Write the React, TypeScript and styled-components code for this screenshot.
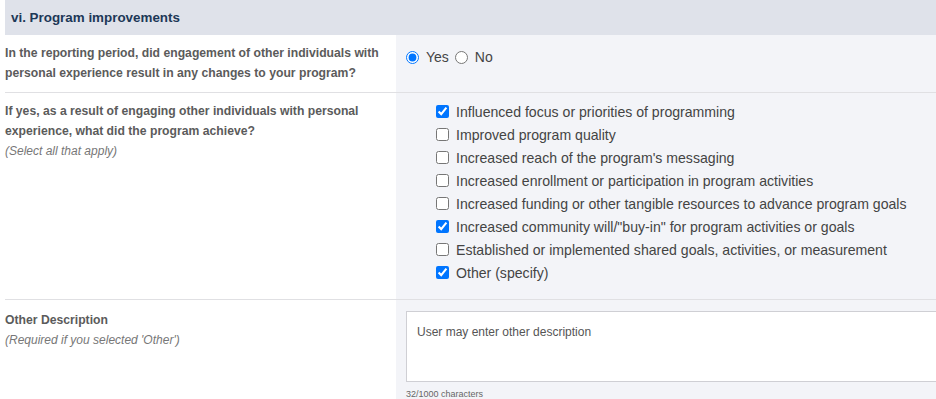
import React from "react";
import styled, { createGlobalStyle } from "styled-components";

const GlobalStyle = createGlobalStyle`
  body {
    margin: 0;
    background: #ffffff;
    font-family: "Liberation Sans", Arial, sans-serif;
    overflow: hidden;
  }
`;

const Page = styled.div`
  padding-left: 5px;
  width: 931px;
`;

const SectionHeader = styled.div`
  height: 35px;
  display: flex;
  align-items: center;
  padding-left: 6px;
  background: #dfe2ea;
  color: #1d3857;
  font-size: 13.4px;
  font-weight: bold;
`;

const Row = styled.div<{ $last?: boolean }>`
  display: grid;
  grid-template-columns: 391px 1fr;
  border-bottom: ${(p) => (p.$last ? "none" : "1px solid #e0e0e3")};
`;

const LeftCell = styled.div<{ $top: number }>`
  padding-top: ${(p) => p.$top}px;
  padding-right: 6px;
`;

const RightCell = styled.div<{ $top: number; $left: number; $height: number }>`
  background: #f3f4f8;
  padding-top: ${(p) => p.$top}px;
  padding-left: ${(p) => p.$left}px;
  height: ${(p) => p.$height}px;
  box-sizing: border-box;
`;

const Question = styled.div`
  font-size: 12.2px;
  line-height: 20px;
  font-weight: bold;
  color: #5b5b5b;
`;

const Hint = styled.div`
  font-size: 12px;
  line-height: 20px;
  font-style: italic;
  color: #777777;
`;

const RadioGroup = styled.div`
  display: flex;
  align-items: center;
  font-size: 14px;
  color: #444444;
`;

const RadioInput = styled.input`
  margin: 0 7px 0 0;
  width: 13px;
  height: 13px;
`;

const RadioLabel = styled.label`
  display: flex;
  align-items: center;
  margin-right: 6px;
`;

const CheckList = styled.div`
  display: flex;
  flex-direction: column;
`;

const CheckItem = styled.label`
  display: flex;
  align-items: center;
  height: 23px;
  font-size: 14.1px;
  color: #444444;
`;

const CheckInput = styled.input`
  margin: 0 7px 0 0;
  width: 13px;
  height: 13px;
`;

const TextBox = styled.div`
  width: calc(100% + 20px);
  height: 71px;
  box-sizing: border-box;
  background: #ffffff;
  border: 1px solid #cfcfd4;
  padding: 13px 10px;
  font-size: 12px;
  color: #555555;
`;

const Counter = styled.div`
  font-size: 9px;
  color: #666666;
  margin-top: 7px;
`;

const options = [
  { label: "Influenced focus or priorities of programming", checked: true },
  { label: "Improved program quality", checked: false },
  { label: "Increased reach of the program's messaging", checked: false },
  { label: "Increased enrollment or participation in program activities", checked: false },
  { label: "Increased funding or other tangible resources to advance program goals", checked: false },
  { label: "Increased community will/\"buy-in\" for program activities or goals", checked: true },
  { label: "Established or implemented shared goals, activities, or measurement", checked: false },
  { label: "Other (specify)", checked: true },
];

export default function App() {
  return (
    <>
      <GlobalStyle />
      <Page>
        <SectionHeader>vi. Program improvements</SectionHeader>
        <Row>
          <LeftCell $top={8}>
            <Question>
              In the reporting period, did engagement of other individuals with personal
              experience result in any changes to your program?
            </Question>
          </LeftCell>
          <RightCell $top={14} $left={10} $height={57}>
            <RadioGroup>
              <RadioLabel>
                <RadioInput type="radio" name="changes" defaultChecked />
                Yes
              </RadioLabel>
              <RadioLabel>
                <RadioInput type="radio" name="changes" />
                No
              </RadioLabel>
            </RadioGroup>
          </RightCell>
        </Row>
        <Row>
          <LeftCell $top={8}>
            <Question>
              If yes, as a result of engaging other individuals with personal experience, what
              did the program achieve?
            </Question>
            <Hint>(Select all that apply)</Hint>
          </LeftCell>
          <RightCell $top={7} $left={40} $height={206}>
            <CheckList>
              {options.map((o) => (
                <CheckItem key={o.label}>
                  <CheckInput type="checkbox" defaultChecked={o.checked} />
                  {o.label}
                </CheckItem>
              ))}
            </CheckList>
          </RightCell>
        </Row>
        <Row $last>
          <LeftCell $top={10}>
            <Question>Other Description</Question>
            <Hint>(Required if you selected 'Other')</Hint>
          </LeftCell>
          <RightCell $top={11} $left={10} $height={100}>
            <TextBox>User may enter other description</TextBox>
            <Counter>32/1000 characters</Counter>
          </RightCell>
        </Row>
      </Page>
    </>
  );
}
